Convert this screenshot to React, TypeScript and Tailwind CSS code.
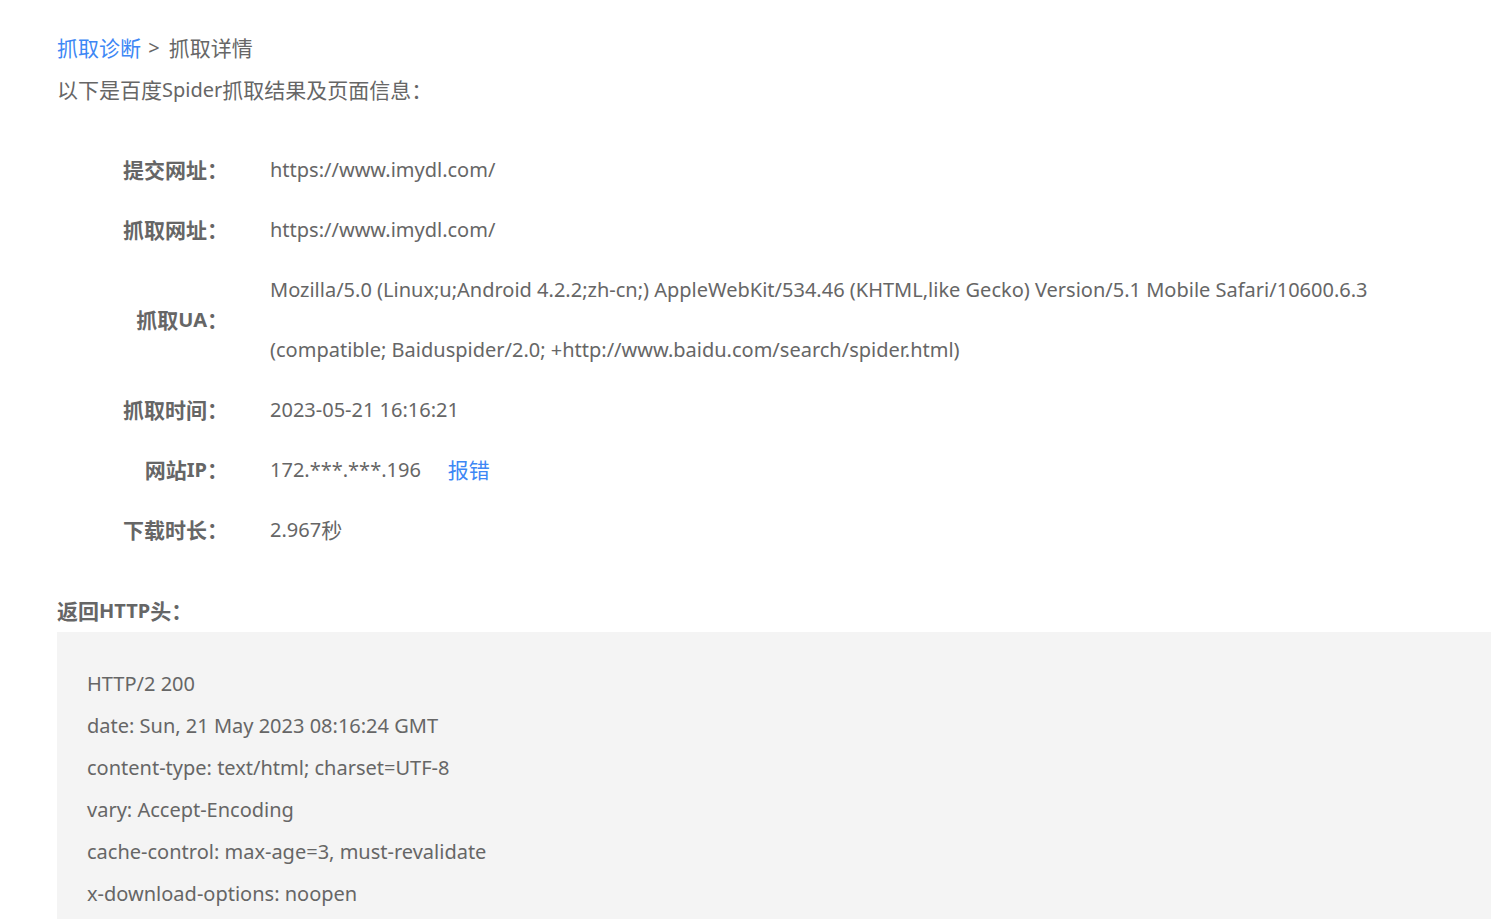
const font = {
  fontFamily: '"Noto Sans", "Noto Sans CJK SC", sans-serif',
};

// Chinese glyphs in the original render a touch wider than the Latin text
function Zh({ children }: { children: React.ReactNode }) {
  return <span className="align-top text-[21px]">{children}</span>;
}

const rows: { label: React.ReactNode; key: string; value: React.ReactNode; tall?: boolean }[] = [
  { key: "submit", label: <Zh>提交网址：</Zh>, value: "https://www.imydl.com/" },
  { key: "fetch", label: <Zh>抓取网址：</Zh>, value: "https://www.imydl.com/" },
  {
    key: "ua",
    label: (
      <>
        <Zh>抓取</Zh>UA<Zh>：</Zh>
      </>
    ),
    tall: true,
    value: (
      <>
        <div className="h-[60px]">
          Mozilla/5.0 (Linux;u;Android 4.2.2;zh-cn;) AppleWebKit/534.46 (KHTML,like Gecko) Version/5.1 Mobile Safari/10600.6.3
        </div>
        <div className="h-[60px]">
          (compatible; Baiduspider/2.0; +http://www.baidu.com/search/spider.html)
        </div>
      </>
    ),
  },
  { key: "time", label: <Zh>抓取时间：</Zh>, value: "2023-05-21 16:16:21" },
  {
    key: "ip",
    label: (
      <>
        <Zh>网站</Zh>IP<Zh>：</Zh>
      </>
    ),
    value: (
      <>
        172.***.***.196
        <a href="#" className="ml-[27px] align-top text-[21px] text-[#3d87f5]">
          报错
        </a>
      </>
    ),
  },
  {
    key: "dl",
    label: <Zh>下载时长：</Zh>,
    value: (
      <>
        2.967<Zh>秒</Zh>
      </>
    ),
  },
];

const headers = [
  "HTTP/2 200",
  "date: Sun, 21 May 2023 08:16:24 GMT",
  "content-type: text/html; charset=UTF-8",
  "vary: Accept-Encoding",
  "cache-control: max-age=3, must-revalidate",
  "x-download-options: noopen",
];

export default function App() {
  return (
    <main
      className="min-h-screen overflow-hidden bg-white pl-[57px] pr-[5px] pt-[27px] text-[20px] text-[#666]"
      style={font}
    >
      <div className="h-[42px] leading-[42px]">
        <a href="#" className="align-top text-[21px] text-[#3d87f5]">
          抓取诊断
        </a>
        <span className="ml-[2px] mr-[4px]"> &gt; </span>
        <Zh>抓取详情</Zh>
      </div>
      <div className="h-[42px] leading-[42px]">
        <Zh>以下是百度</Zh>Spider<Zh>抓取结果及页面信息：</Zh>
      </div>

      <div className="mt-[29px]">
        {rows.map((r) => (
          <div key={r.key} className="flex">
            <div
              className={`w-[171px] shrink-0 text-right font-bold ${
                r.tall ? "h-[120px] leading-[120px]" : "h-[60px] leading-[60px]"
              }`}
            >
              {r.label}
            </div>
            <div
              className={`ml-[42px] whitespace-nowrap leading-[60px] ${
                r.tall ? "h-[120px]" : "h-[60px]"
              }`}
            >
              {r.value}
            </div>
          </div>
        ))}
      </div>

      <div className="mt-[30px] h-[42px] font-bold leading-[42px]">
        <Zh>返回</Zh>HTTP<Zh>头：</Zh>
      </div>
      <div className="bg-[#f4f4f4] px-[30px] pb-[30px] pt-[31px]">
        {headers.map((h) => (
          <div key={h} className="leading-[42px]">
            {h}
          </div>
        ))}
      </div>
    </main>
  );
}
